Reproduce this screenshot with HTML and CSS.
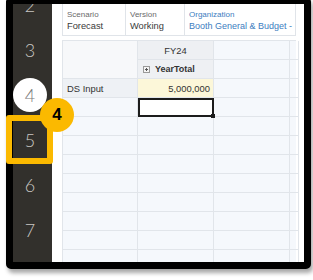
FILE: index.html
```html
<!DOCTYPE html>
<html>
<head>
<meta charset="utf-8">
<link rel="stylesheet" href="styles.css">
</head>
<body>
<div class="frame">
  <div class="sidebar">
    <div class="num first">2</div>
    <div class="num">3</div>
    <div class="num"><span class="circle">4</span></div>
    <div class="num">5</div>
    <div class="num">6</div>
    <div class="num">7</div>
  </div>
  <div class="main">
    <div class="pov">
      <div class="pov-col c1"><div class="lbl">Scenario</div><div class="val">Forecast</div></div>
      <div class="pov-col c2"><div class="lbl">Version</div><div class="val">Working</div></div>
      <div class="pov-col c3 link"><div class="lbl">Organization</div><div class="val">Booth General &amp; Budget -</div></div>
    </div>
    <div class="grid">
      <div class="cell corner"></div>
      <div class="cell colhead">FY24</div>
      <div class="cell"></div>
      <div class="cell"></div>
      <div class="cell colhead bold"><svg class="plus" width="7" height="7" viewBox="0 0 7 7"><rect x="0.5" y="0.5" width="6" height="6" fill="#f4f4f4" stroke="#9a9a9a"/><path d="M2 3.5h3M3.5 2v3" stroke="#555" stroke-width="1"/></svg>YearTotal</div>
      <div class="cell"></div>
      <div class="cell"></div>
      <div class="cell rowhead">DS Input</div>
      <div class="cell input">5,000,000</div>
      <div class="cell"></div>
      <div class="cell"></div>
      <div class="cell"></div>
      <div class="cell selected"></div>
      <div class="cell"></div>
      <div class="cell"></div>
      <div class="cell"></div><div class="cell"></div><div class="cell"></div><div class="cell"></div>
      <div class="cell"></div><div class="cell"></div><div class="cell"></div><div class="cell"></div>
      <div class="cell"></div><div class="cell"></div><div class="cell"></div><div class="cell"></div>
      <div class="cell"></div><div class="cell"></div><div class="cell"></div><div class="cell"></div>
      <div class="cell"></div><div class="cell"></div><div class="cell"></div><div class="cell"></div>
      <div class="cell"></div><div class="cell"></div><div class="cell"></div><div class="cell"></div>
      <div class="cell"></div><div class="cell"></div><div class="cell"></div><div class="cell"></div>
      <div class="cell"></div><div class="cell"></div><div class="cell"></div><div class="cell"></div>
    </div>
  </div>
</div>
<div class="hl-box"></div>
<div class="badge">4</div>
</body>
</html>
```
FILE: styles.css
```css
html, body {
  margin: 0;
  padding: 0;
  background: #ffffff;
  overflow: hidden;
  width: 313px;
  height: 280px;
}
.frame {
  position: relative;
  margin: -3px 0 0 6px;
  width: 305px;
  height: 272px;
  box-sizing: border-box;
  border: 7px solid #000;
  border-radius: 5px;
  box-shadow: 2px 4px 4px rgba(0,0,0,0.35);
  background: #fff;
  display: flex;
  overflow: hidden;
}
.sidebar {
  width: 39px;
  flex: none;
  background: #32302c;
  display: flex;
  flex-direction: column;
  overflow: hidden;
}
.num {
  height: 45px;
  flex: none;
  display: flex;
  align-items: center;
  justify-content: center;
  padding-right: 5px;
  font-family: Lato, "Open Sans", sans-serif;
  font-weight: 300;
  font-size: 18px;
  color: #c9c7c3;
}
.num.first {
  margin-top: -22px;
}
.circle {
  width: 34px;
  height: 34px;
  border-radius: 50%;
  background: #fff;
  color: #7a7a7a;
  display: flex;
  align-items: center;
  justify-content: center;
}
.main {
  flex: 1;
  padding: 0 8px 0 10px;
  overflow: hidden;
}
.pov {
  height: 32px;
  box-sizing: border-box;
  border: 1px solid #e0e4e9;
  border-top: none;
  display: flex;
  font-family: "Liberation Sans", Arial, sans-serif;
}
.pov-col {
  box-sizing: border-box;
  padding: 5px 0 0 4px;
  white-space: nowrap;
  overflow: hidden;
}
.c1 { width: 63px; border-right: 1px solid #e0e4e9; }
.c2 { width: 59px; border-right: 1px solid #e0e4e9; }
.c3 { flex: 1; }
.lbl {
  font-size: 8px;
  line-height: 11px;
  color: #6a6a6a;
}
.val {
  font-size: 9.3px;
  line-height: 13px;
  color: #3a3a3a;
}
.link .lbl, .link .val { color: #3d7dc0; }
.link .val { font-size: 9px; }
.grid {
  margin-top: 4px;
  display: grid;
  grid-template-columns: 75px 76px 76px 7px;
  grid-auto-rows: 19px;
  border-left: 1px solid #e1e5ea;
  border-top: 1px solid #e1e5ea;
  background: #f5f8fc;
  font-family: "Liberation Sans", Arial, sans-serif;
  font-size: 9.4px;
  color: #333;
}
.cell {
  box-sizing: border-box;
  border-right: 1px solid #e1e5ea;
  border-bottom: 1px solid #e1e5ea;
  display: flex;
  align-items: center;
  padding: 0 4px;
  white-space: nowrap;
  overflow: hidden;
}
.corner {
  grid-row: span 2;
  background: #f7f8fa;
}
.colhead {
  background: #eef0f3;
  justify-content: center;
}
.colhead.bold {
  font-weight: bold;
  font-size: 9px;
  justify-content: flex-start;
  padding-left: 5px;
}
.plus {
  margin-right: 5px;
  flex: none;
}
.rowhead {
  background: #eef1f5;
}
.input {
  background: #fcf7d9;
  justify-content: flex-end;
  padding-right: 3px;
}
.selected {
  background: #fff;
  border: 2px solid #1c1c1c;
  position: relative;
  overflow: visible;
}
.selected::after {
  content: "";
  position: absolute;
  right: -3px;
  bottom: -3px;
  width: 4px;
  height: 4px;
  background: #1c1c1c;
}
.hl-box {
  position: absolute;
  left: 6px;
  top: 115px;
  width: 47px;
  height: 49px;
  box-sizing: border-box;
  border: 6px solid #fbb900;
  border-radius: 3px;
}
.badge {
  position: absolute;
  left: 40px;
  top: 98px;
  width: 34px;
  height: 34px;
  border-radius: 50%;
  background: #fbb900;
  color: #000;
  font-family: "Liberation Sans", Arial, sans-serif;
  font-weight: bold;
  font-size: 17px;
  display: flex;
  align-items: center;
  justify-content: center;
}
```
